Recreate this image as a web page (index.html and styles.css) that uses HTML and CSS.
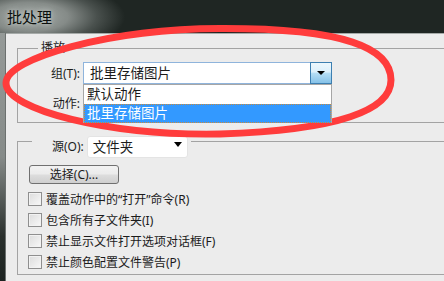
FILE: index.html
```html
<!DOCTYPE html>
<html lang="zh-CN">
<head>
    <meta charset="UTF-8">
    <title>批处理</title>
    <link rel="stylesheet" href="styles.css">
</head>
<body>
    <div class="titlebar">
        <span class="title">批处理</span>
    </div>

    <div class="window">
        <div class="frame"></div>
        <div class="dialog">
            <div class="group">
                <div class="legend">播放</div>
                <div class="field-row">
                    <label class="field-label">组(T):</label>
                    <div class="combo combo-open">
                        <span class="combo-text">批里存储图片</span>
                        <span class="combo-btn"><i class="arrow"></i></span>
                        <ul class="combo-list">
                            <li>默认动作</li>
                            <li class="selected">批里存储图片</li>
                        </ul>
                    </div>
                </div>
                <div class="field-row field-row-2">
                    <label class="field-label">动作:</label>
                    <!-- hidden under the open list -->
                    <div class="combo"></div>
                </div>
            </div>

            <div class="group group-source">
                <div class="legend legend-source">
                    <span>源(O):</span>
                    <div class="select-plain">
                        <span>文件夹</span>
                        <i class="arrow arrow-big"></i>
                    </div>
                </div>
                <button class="btn">选择(C)...</button>
                <label class="check check-first"><span class="box"></span>覆盖动作中的“打开”命令(R)</label>
                <label class="check"><span class="box"></span>包含所有子文件夹(I)</label>
                <label class="check"><span class="box"></span>禁止显示文件打开选项对话框(F)</label>
                <label class="check"><span class="box"></span>禁止颜色配置文件警告(P)</label>
            </div>
        </div>
    </div>

    <!-- red marker round the group combo -->
    <svg class="mark" width="444" height="281" viewBox="0 0 444 281">
        <path d="M 6 83 C 6 58, 110 29, 220 28.5 C 345 28, 391 48, 391 80 C 391 110, 340 130, 220 134 C 110 136, 6 110, 6 83 Z"
              fill="none" stroke="#ff3c3c" stroke-width="7"/>
    </svg>
</body>
</html>
```

FILE: styles.css
```css
* {
    box-sizing: border-box;
}

body {
    margin: 0;
    width: 444px;
    height: 281px;
    overflow: hidden;
    position: relative;
    font-family: "Noto Sans", "Noto Sans CJK SC", sans-serif;
    font-size: 12px;
    color: #1b1b1b;
    background-color: #ececec;
}

.titlebar {
    height: 33px;
    padding-left: 7px;
    display: flex;
    align-items: center;
    background: radial-gradient(ellipse 95px 36px at 30px 17px, #a4aaa7 0%, #858b88 40%, #4a514e 70%, #1f2623 100%);
}

.title {
    font-size: 15px;
    line-height: 18px;
    color: #0a0f0d;
    text-shadow: 0 0 4px #c3c8c5, 0 0 8px #b4b9b6;
}

.window {
    display: flex;
    height: 248px;
}

.frame {
    width: 6px;
    background: linear-gradient(#959a98, #868b89 50%, #2a302d 82%, #1c2220);
    border-right: 1px solid #6c716f;
}

.dialog {
    flex: 1;
    background-color: #ececec;
    border-top: 1px solid #a5aaa8;
    overflow: hidden;
}

.group {
    border: 1px solid #a3a3a3;
    margin: 14px -12px 0 11px;
    padding-bottom: 8px;
}

.legend {
    width: fit-content;
    margin: -9px 0 0 20px;
    padding: 0 3px;
    line-height: 16px;
    background-color: #ececec;
}

.field-row {
    display: flex;
    align-items: center;
    height: 22px;
    margin-top: 6px;
}

.field-row-2 {
    margin-top: 8px;
}

.field-label {
    width: 62px;
    margin-right: 3px;
    text-align: right;
}

.combo {
    position: relative;
    width: 249px;
    height: 22px;
    display: flex;
    align-items: center;
    background-color: #fff;
    border: 1px solid #8fb4dc;
}

.combo-text {
    flex: 1;
    padding-left: 6px;
    font-size: 13.5px;
    line-height: 18px;
}

.combo-btn {
    width: 22px;
    height: 22px;
    margin: -1px -1px -1px 0;
    display: flex;
    align-items: center;
    justify-content: center;
    border: 1px solid #3c7fb1;
    background: linear-gradient(#ecf7fd, #dcf0fb 45%, #b4ddf4 52%, #86c2e8);
}

.arrow {
    width: 0;
    height: 0;
    border-left: 4px solid transparent;
    border-right: 4px solid transparent;
    border-top: 4px solid #000;
}

.arrow-big {
    border-top-width: 5px;
    margin-top: -5px;
}

.combo-list {
    position: absolute;
    top: 21px;
    left: -1px;
    width: 249px;
    margin: 0;
    padding: 0;
    list-style: none;
    background-color: #fff;
    border: 1px solid #a6a6a6;
    border-bottom: none;
    z-index: 2;
}

.combo-list li {
    height: 19px;
    line-height: 19px;
    padding-left: 3px;
    font-size: 13.5px;
}

.combo-list .selected {
    background-color: #3399ff;
    color: #fff;
    outline: 1px dotted #c98a3c;
    outline-offset: -1px;
}

.group-source {
    margin-top: 18px;
    padding-bottom: 2px;
}

.legend-source {
    display: flex;
    align-items: center;
    height: 22px;
    margin: -6px 0 0 14px;
    padding: 0 3px 0 20px;
}

.select-plain {
    width: 101px;
    height: 22px;
    margin-left: 3px;
    padding: 0 5px;
    display: flex;
    align-items: center;
    justify-content: space-between;
    background-color: #fff;
    border: 1px solid #e4e4e4;
    border-radius: 3px;
    font-size: 13.5px;
}

.btn {
    display: block;
    width: 90px;
    height: 19px;
    margin: 7px 0 0 11px;
    padding: 0;
    font-family: inherit;
    font-size: 12px;
    line-height: 16px;
    color: #1b1b1b;
    border: 1px solid #707070;
    border-radius: 3px;
    background: linear-gradient(#f2f2f2, #ebebeb 48%, #dddddd 52%, #cfcfcf);
}

.check {
    display: flex;
    align-items: center;
    height: 21px;
    margin-left: 10px;
}

.check-first {
    margin-top: 4px;
}

.box {
    width: 14px;
    height: 14px;
    margin-right: 4px;
    border: 1px solid #8f8f8f;
    background: linear-gradient(135deg, #dcdcdc, #f8f8f8);
    box-shadow: inset 0 0 0 1px #f2f2f2;
}

.mark {
    position: absolute;
    left: 0;
    top: 0;
    pointer-events: none;
}
```
